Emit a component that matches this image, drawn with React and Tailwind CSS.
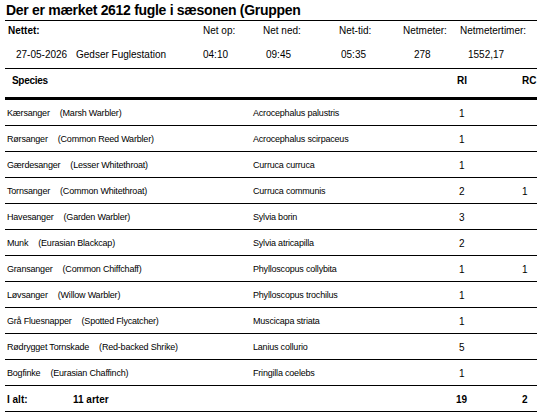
import React from 'react';

const birds = [
  { name: 'Kærsanger', en: 'Marsh Warbler', latin: 'Acrocephalus palustris', ri: 1 },
  { name: 'Rørsanger', en: 'Common Reed Warbler', latin: 'Acrocephalus scirpaceus', ri: 1 },
  { name: 'Gærdesanger', en: 'Lesser Whitethroat', latin: 'Curruca curruca', ri: 1 },
  { name: 'Tornsanger', en: 'Common Whitethroat', latin: 'Curruca communis', ri: 2, rc: 1 },
  { name: 'Havesanger', en: 'Garden Warbler', latin: 'Sylvia borin', ri: 3 },
  { name: 'Munk', en: 'Eurasian Blackcap', latin: 'Sylvia atricapilla', ri: 2 },
  { name: 'Gransanger', en: 'Common Chiffchaff', latin: 'Phylloscopus collybita', ri: 1, rc: 1 },
  { name: 'Løvsanger', en: 'Willow Warbler', latin: 'Phylloscopus trochilus', ri: 1 },
  { name: 'Grå Fluesnapper', en: 'Spotted Flycatcher', latin: 'Muscicapa striata', ri: 1 },
  { name: 'Rødrygget Tornskade', en: 'Red-backed Shrike', latin: 'Lanius collurio', ri: 5 },
  { name: 'Bogfinke', en: 'Eurasian Chaffinch', latin: 'Fringilla coelebs', ri: 1 },
];

export default function App() {
  return (
    <div className="h-[416px] w-[539px] bg-white font-['Liberation_Sans',Arial,sans-serif] text-black">
      <div className="ml-[5px] w-[532px]">
        <div className="flex h-[21px] items-center border-b border-black pl-[1px] text-[14px] font-bold leading-none tracking-[-0.3px] whitespace-nowrap">
          Der er mærket 2612 fugle i sæsonen (Gruppen
        </div>

        <div className="border-b border-black text-[10px] leading-none">
          <div className="grid h-[20px] grid-cols-[198px_60px_76px_64px_57px_1fr] items-center">
            <span className="pl-[3px] font-bold">Nettet:</span>
            <span>Net op:</span>
            <span>Net ned:</span>
            <span>Net-tid:</span>
            <span>Netmeter:</span>
            <span>Netmetertimer:</span>
          </div>
          <div className="grid h-[27px] grid-cols-[198px_60px_76px_64px_57px_1fr] items-center">
            <span className="flex">
              <span className="w-[71px] pl-[11px]">27-05-2026</span>
              <span>Gedser Fuglestation</span>
            </span>
            <span>04:10</span>
            <span className="pl-[3px]">09:45</span>
            <span className="pl-[2px]">05:35</span>
            <span className="pl-[11px]">278</span>
            <span className="pl-[8px]">1552,17</span>
          </div>
        </div>

        <div className="grid h-[31px] grid-cols-[452px_65px_1fr] items-center border-b-[3px] border-black pb-[4px] text-[10px] font-bold leading-none">
          <span className="pl-[7px] tracking-[-0.3px]">Species</span>
          <span>RI</span>
          <span>RC</span>
        </div>

        {birds.map((b) => (
          <div
            key={b.name}
            className="grid h-[26px] grid-cols-[248px_203px_65px_1fr] items-center border-b border-black pt-[2px] text-[9px] leading-none tracking-[-0.2px]"
          >
            <span className="pl-[2px] whitespace-nowrap">
              {b.name}
              <span className="ml-[10px]">({b.en})</span>
            </span>
            <span>{b.latin}</span>
            <span className="pl-[3px] text-[10px]">{b.ri}</span>
            <span className="pl-[1px] text-[10px]">{b.rc ?? ''}</span>
          </div>
        ))}

        <div className="grid h-[26px] grid-cols-[68px_383px_65px_1fr] items-center border-b border-black pt-[2px] text-[10px] font-bold leading-none">
          <span className="pl-[2px]">I alt:</span>
          <span>11 arter</span>
          <span>19</span>
          <span className="pl-[1px]">2</span>
        </div>
      </div>
    </div>
  );
}
